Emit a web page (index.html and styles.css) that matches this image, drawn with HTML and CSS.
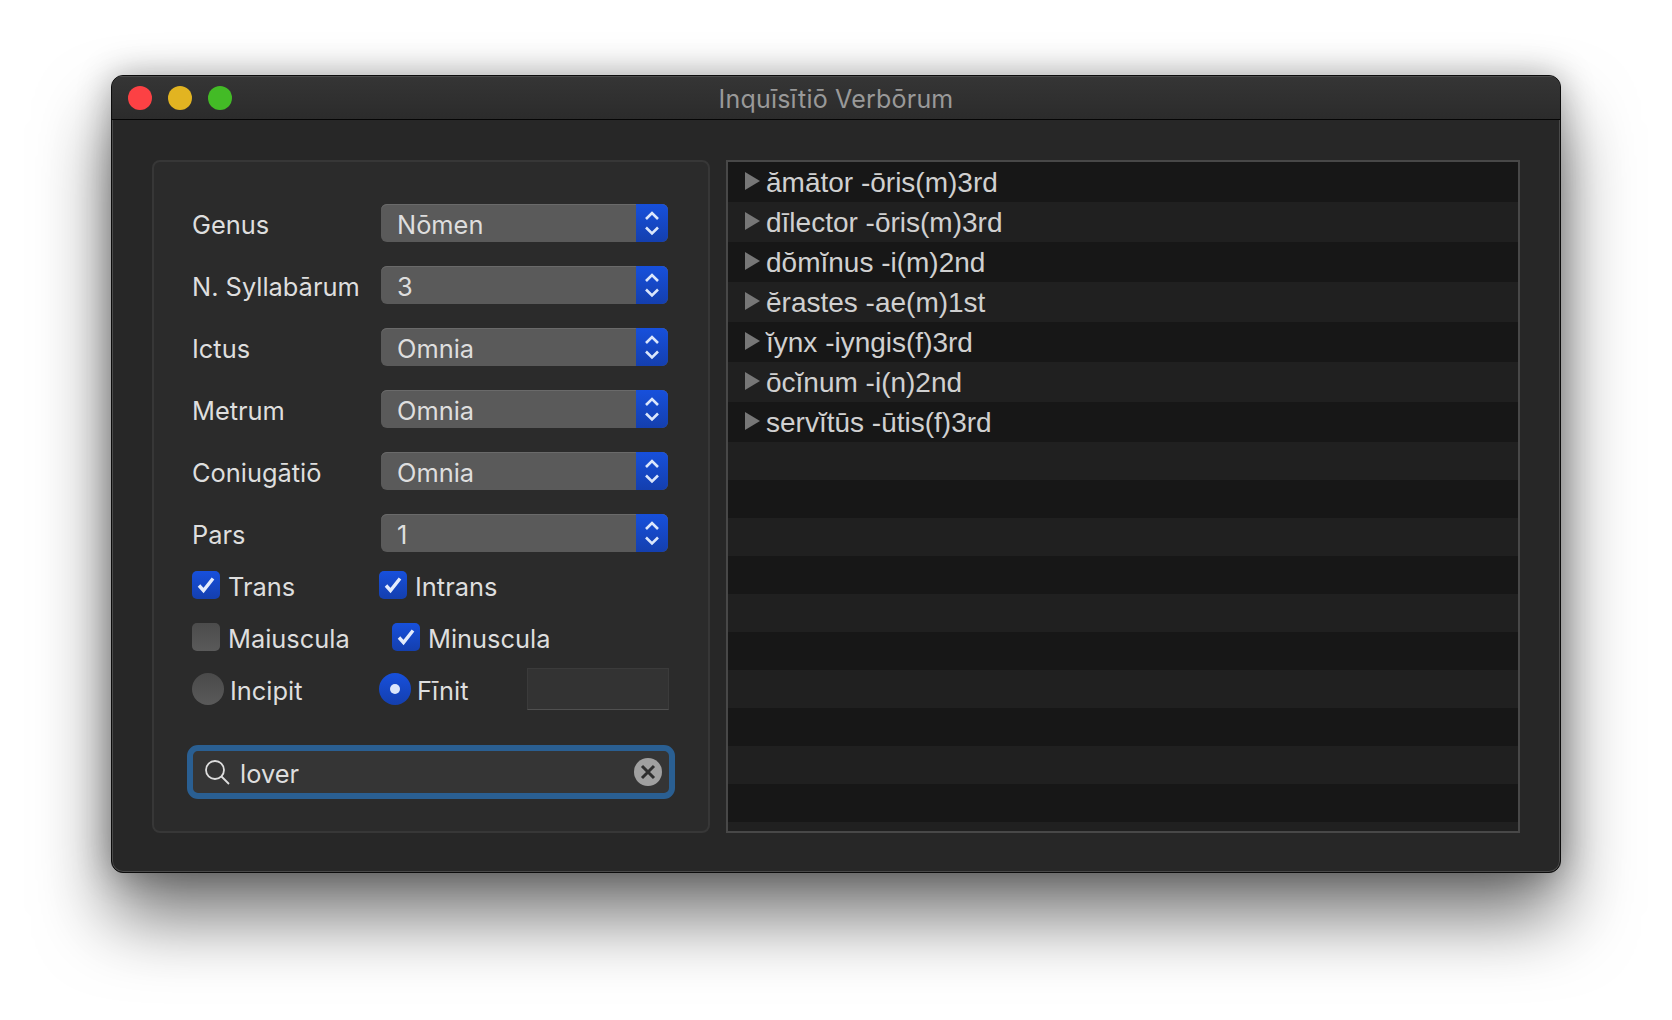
FILE: index.html
```html
<!DOCTYPE html>
<html lang="en">
<head>
    <meta charset="UTF-8">
    <title>Inquīsītiō Verbōrum</title>
    <link rel="stylesheet" href="styles.css">
</head>
<body>
    <div class="window">
        <div class="titlebar">
            <div class="lights">
                <span class="light red"></span>
                <span class="light yellow"></span>
                <span class="light green"></span>
            </div>
            <div class="title">Inquīsītiō Verbōrum</div>
        </div>
        <div class="content">
            <form class="panel">
                <div class="field"><label>Genus</label><div class="select"><span class="value">Nōmen</span><span class="stepper"><svg viewBox="0 0 16 28"><path d="M2 10 8 4 14 10M2 18.500 8 24.500 14 18.500"/></svg></span></div></div>
                <div class="field"><label>N. Syllabārum</label><div class="select"><span class="value">3</span><span class="stepper"><svg viewBox="0 0 16 28"><path d="M2 10 8 4 14 10M2 18.500 8 24.500 14 18.500"/></svg></span></div></div>
                <div class="field"><label>Ictus</label><div class="select"><span class="value">Omnia</span><span class="stepper"><svg viewBox="0 0 16 28"><path d="M2 10 8 4 14 10M2 18.500 8 24.500 14 18.500"/></svg></span></div></div>
                <div class="field"><label>Metrum</label><div class="select"><span class="value">Omnia</span><span class="stepper"><svg viewBox="0 0 16 28"><path d="M2 10 8 4 14 10M2 18.500 8 24.500 14 18.500"/></svg></span></div></div>
                <div class="field"><label>Coniugātiō</label><div class="select"><span class="value">Omnia</span><span class="stepper"><svg viewBox="0 0 16 28"><path d="M2 10 8 4 14 10M2 18.500 8 24.500 14 18.500"/></svg></span></div></div>
                <div class="field"><label>Pars</label><div class="select"><span class="value">1</span><span class="stepper"><svg viewBox="0 0 16 28"><path d="M2 10 8 4 14 10M2 18.500 8 24.500 14 18.500"/></svg></span></div></div>

                <div class="checks first">
                    <span class="check-item item-a"><span class="box on"><svg viewBox="0 0 28 28"><path d="M7 14.500 11.500 19.500 21 7.500"/></svg></span>Trans</span>
                    <span class="check-item"><span class="box on"><svg viewBox="0 0 28 28"><path d="M7 14.500 11.500 19.500 21 7.500"/></svg></span>Intrans</span>
                </div>
                <div class="checks second">
                    <span class="check-item item-b"><span class="box"></span>Maiuscula</span>
                    <span class="check-item"><span class="box on"><svg viewBox="0 0 28 28"><path d="M7 14.500 11.500 19.500 21 7.500"/></svg></span>Minuscula</span>
                </div>
                <div class="radios">
                    <span class="radio-item item-a"><span class="radio"></span>Incipit</span>
                    <span class="radio-item item-c"><span class="radio on"></span>Fīnit</span>
                    <div class="textfield"></div>
                </div>

                <div class="search">
                    <svg class="lens" viewBox="0 0 26 26"><circle cx="11" cy="11" r="9"/><path d="M17.500 17.500 25 25"/></svg>
                    <span class="query">lover</span>
                    <span class="clear"><svg viewBox="0 0 28 28"><path d="M8 8 20 20M20 8 8 20"/></svg></span>
                </div>
            </form>

            <div class="list">
                <div class="row"><span class="arrow"></span>ămātor -ōris(m)3rd</div>
                <div class="row"><span class="arrow"></span>dīlector -ōris(m)3rd</div>
                <div class="row"><span class="arrow"></span>dŏmĭnus -i(m)2nd</div>
                <div class="row"><span class="arrow"></span>ĕrastes -ae(m)1st</div>
                <div class="row"><span class="arrow"></span>ĭynx -iyngis(f)3rd</div>
                <div class="row"><span class="arrow"></span>ōcĭnum -i(n)2nd</div>
                <div class="row"><span class="arrow"></span>servĭtūs -ūtis(f)3rd</div>
                <div class="stripe"></div>
                <div class="stripe"></div>
                <div class="stripe"></div>
                <div class="stripe"></div>
                <div class="stripe"></div>
                <div class="stripe"></div>
                <div class="stripe"></div>
                <div class="stripe"></div>
                <div class="stripe"></div>
                <div class="stripe"></div>
            </div>
        </div>
    </div>
</body>
</html>
```
FILE: styles.css
```css
html, body {
    margin: 0;
    height: 100%;
    overflow: hidden;
}

body {
    background: #fff;
    font-family: Inter, "Liberation Sans", sans-serif;
    padding: 75px 111px 0;
    box-sizing: border-box;
}

.window {
    width: 1450px;
    height: 798px;
    box-sizing: border-box;
    background: #272727;
    border: 1px solid #0c0c0c;
    border-radius: 12px;
    box-shadow: inset 0 0 0 1px #4a4a4a, 0 44px 72px rgba(0, 0, 0, 0.55), 0 0 34px rgba(0, 0, 0, 0.3);
    display: flex;
    flex-direction: column;
    overflow: hidden;
}

.titlebar {
    position: relative;
    height: 42px;
    flex: none;
    display: flex;
    align-items: center;
    justify-content: center;
    background: linear-gradient(#353535, #2b2b2b);
    border-top: 1px solid #4c4c4c;
    border-bottom: 1px solid #050505;
    box-sizing: content-box;
}

.lights {
    position: absolute;
    left: 16px;
    top: 9px;
    display: flex;
    gap: 16px;
}

.light {
    width: 24px;
    height: 24px;
    border-radius: 50%;
}

.red { background: #fc4144; }
.yellow { background: #e2b421; }
.green { background: #43bb26; }

.title {
    color: #999;
    font-size: 25px;
    letter-spacing: 0.2px;
    padding-top: 2px;
}

.content {
    flex: 1;
    display: flex;
    gap: 16px;
    padding: 40px 40px 39px 40px;
}

.panel {
    width: 558px;
    flex: none;
    box-sizing: border-box;
    background: #2b2b2b;
    border: 2px solid #373737;
    border-radius: 8px;
    padding: 42px 38px 0 38px;
    color: #dedede;
    font-size: 25.4px;
}

.field {
    display: flex;
    align-items: center;
    height: 38px;
    margin-bottom: 24px;
}

.field label {
    width: 189px;
    flex: none;
    padding-top: 2px;
}

.select {
    width: 287px;
    height: 38px;
    display: flex;
    border-radius: 6px;
    overflow: hidden;
    background: #5a5a5a;
    box-shadow: inset 0 1px 0 #6a6a6a;
}

.value {
    flex: 1;
    padding: 4px 0 0 16px;
    line-height: 34px;
}

.stepper {
    width: 32px;
    background: linear-gradient(#1750dc, #143fae);
    display: flex;
    align-items: center;
    justify-content: center;
}

.stepper svg {
    width: 16px;
    height: 28px;
    fill: none;
    stroke: #dbe6fb;
    stroke-width: 2.6;
}

.checks {
    display: flex;
    align-items: center;
    height: 28px;
}

.first { margin-top: -5px; }
.second { margin-top: 24px; }

.check-item, .radio-item {
    display: flex;
    align-items: center;
    padding-top: 2px;
}

.item-a { width: 187px; }
.item-b { width: 200px; }
.item-c { width: 148px; }

.box {
    width: 28px;
    height: 28px;
    border-radius: 5px;
    margin: -2px 8px 0 0;
    background: linear-gradient(#4c4c4c, #5a5a5a);
}

.box.on {
    background: linear-gradient(#1750dc, #143fae);
}

.box svg {
    display: block;
    fill: none;
    stroke: #e4ecfc;
    stroke-width: 3.4;
}

.radios {
    display: flex;
    align-items: center;
    margin-top: 17px;
    height: 42px;
}

.radio {
    width: 32px;
    height: 32px;
    border-radius: 50%;
    margin: -3px 6px 0 0;
    background: linear-gradient(#4a4a4a, #5a5a5a);
    display: flex;
    align-items: center;
    justify-content: center;
}

.radio.on {
    background: linear-gradient(#1750dc, #143fae);
}

.radio.on::after {
    content: "";
    width: 10px;
    height: 10px;
    border-radius: 50%;
    background: #dbe6fb;
}

.textfield {
    width: 142px;
    height: 42px;
    box-sizing: border-box;
    background: #333;
    border: 1px solid #3b3b3b;
    border-bottom: 1px solid #505050;
}

.search {
    margin: 35px 0 0 -5px;
    width: 488px;
    height: 54px;
    box-sizing: border-box;
    display: flex;
    align-items: center;
    background: #353535;
    border: 6px solid #2a5f92;
    border-radius: 11px;
    padding: 0 7px 0 11px;
}

.lens {
    width: 26px;
    height: 26px;
    margin-right: 10px;
    fill: none;
    stroke: #dedede;
    stroke-width: 1.8;
}

.query {
    flex: 1;
    padding-top: 3px;
}

.clear {
    width: 28px;
    height: 28px;
    border-radius: 50%;
    background: #a0a0a0;
}

.clear svg {
    display: block;
    fill: none;
    stroke: #2f2f2f;
    stroke-width: 3;
}

.list {
    flex: 1;
    background: #202020;
    border: 2px solid #484848;
    overflow: hidden;
    color: #d0d0d0;
    font-family: "Liberation Sans", sans-serif;
    font-size: 28px;
}

.row {
    height: 40px;
    box-sizing: border-box;
    display: flex;
    align-items: center;
    padding: 2px 0 0 17px;
}

.arrow {
    width: 0;
    height: 0;
    border-left: 15px solid #777;
    border-top: 9px solid transparent;
    border-bottom: 9px solid transparent;
    margin: -4px 6px 0 0;
}

.stripe {
    height: 38px;
}

.row:nth-child(odd), .stripe:nth-child(odd) {
    background: #171717;
}
```
